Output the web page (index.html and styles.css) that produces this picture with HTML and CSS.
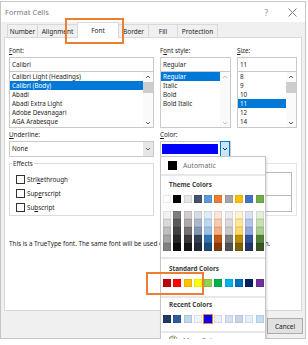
FILE: index.html
```html
<!DOCTYPE html>
<html lang="en">
  <head>
    <meta charset="UTF-8" />
    <title>Format Cells</title>
    <link rel="stylesheet" href="styles.css">
  </head>
  <body>
    <div class="dialog">
      <div class="titlebar">
        <span class="title">Format Cells</span>
        <span class="help">?</span>
        <svg class="close" width="9" height="9" viewBox="0 0 9 9"><path d="M0.5 0.5 L8.5 8.5 M8.5 0.5 L0.5 8.5" stroke="#6e6e6e" stroke-width="0.9" fill="none"/></svg>
      </div>

      <div class="tabs">
        <div class="tab tab-number">Number</div>
        <div class="tab tab-align">Alignment</div>
        <div class="tab tab-font active">Font</div>
        <div class="tab tab-border">Border</div>
        <div class="tab tab-fill">Fill</div>
        <div class="tab tab-prot">Protection</div>
      </div>

      <div class="page">
        <div class="cols">
          <div class="field">
            <div class="label"><u>F</u>ont:</div>
            <div class="input">Calibri</div>
            <div class="list">
              <div class="items">
                <div class="opt">Calibri Light (Headings)</div>
                <div class="opt sel">Calibri (Body)</div>
                <div class="opt">Abadi</div>
                <div class="opt">Abadi Extra Light</div>
                <div class="opt">Adobe Devanagari</div>
                <div class="opt">AGA Arabesque</div>
              </div>
              <div class="scroll">
                <svg width="6" height="4" viewBox="0 0 6 4"><path d="M1 3 L3 1 L5 3" stroke="#606060" fill="none"/></svg>
                <div class="thumb"></div>
                <svg class="down" width="6" height="4" viewBox="0 0 6 4"><path d="M1 1 L3 3 L5 1" stroke="#606060" fill="none"/></svg>
              </div>
            </div>
          </div>

          <div class="field">
            <div class="label">F<u>o</u>nt style:</div>
            <div class="input">Regular</div>
            <div class="list">
              <div class="items">
                <div class="opt sel">Regular</div>
                <div class="opt">Italic</div>
                <div class="opt">Bold</div>
                <div class="opt">Bold Italic</div>
              </div>
              <div class="scroll">
                <svg width="6" height="4" viewBox="0 0 6 4"><path d="M1 3 L3 1 L5 3" stroke="#c2c2c2" fill="none"/></svg>
                <svg class="down" width="6" height="4" viewBox="0 0 6 4"><path d="M1 1 L3 3 L5 1" stroke="#c2c2c2" fill="none"/></svg>
              </div>
            </div>
          </div>

          <div class="field">
            <div class="label"><u>S</u>ize:</div>
            <div class="input">11</div>
            <div class="list">
              <div class="items">
                <div class="opt">8</div>
                <div class="opt">9</div>
                <div class="opt">10</div>
                <div class="opt sel">11</div>
                <div class="opt">12</div>
                <div class="opt">14</div>
              </div>
              <div class="scroll">
                <svg width="6" height="4" viewBox="0 0 6 4"><path d="M1 3 L3 1 L5 3" stroke="#606060" fill="none"/></svg>
                <div class="thumb"></div>
                <svg class="down" width="6" height="4" viewBox="0 0 6 4"><path d="M1 1 L3 3 L5 1" stroke="#606060" fill="none"/></svg>
              </div>
            </div>
          </div>
        </div>

        <div class="cols mid">
          <div class="field">
            <div class="label"><u>U</u>nderline:</div>
            <div class="select">
              <div class="val">None</div>
              <div class="arrow">
                <svg width="6" height="4" viewBox="0 0 6 4"><path d="M1 1 L3 3 L5 1" stroke="#606060" fill="none"/></svg>
              </div>
            </div>
          </div>
          <div class="field">
            <div class="label"><u>C</u>olor:</div>
            <div class="select color-select">
              <div class="chosen"></div>
              <div class="arrow open">
                <svg width="6" height="4" viewBox="0 0 6 4"><path d="M1 1 L3 3 L5 1" stroke="#333" fill="none"/></svg>
              </div>
            </div>
          </div>
        </div>

        <div class="groups">
          <div class="group">
            <div class="legend">Effects</div>
            <div class="checks">
              <div class="check"><span class="box"></span><span>Stri<u>k</u>ethrough</span></div>
              <div class="check"><span class="box"></span><span>Sup<u>e</u>rscript</span></div>
              <div class="check"><span class="box"></span><span>Su<u>b</u>script</span></div>
            </div>
          </div>
          <!-- preview: its title and sample sit under the open colour list -->
          <div class="group preview-group">
            <div class="sample-box">
              <div class="sample"></div>
            </div>
          </div>
        </div>

        <p class="note">This is a TrueType font.  The same font will be used on both your printer and your screen.</p>
      </div>

      <div class="buttons">
        <button class="btn">OK</button>
        <button class="btn">Cancel</button>
      </div>

      <div class="palette">
        <div class="auto">
          <span class="auto-swatch"></span>
          <span class="auto-text">Automatic</span>
        </div>
        <div class="sep"></div>

        <div class="head">Theme Colors</div>
        <div class="swatches theme"></div>
        <div class="swatches shades"></div>
        <div class="sep sep-std"></div>

        <div class="head head-std">Standard Colors</div>
        <div class="swatches standard"></div>
        <div class="sep sep-recent"></div>

        <div class="head head-recent">Recent Colors</div>
        <div class="swatches recent"></div>
        <div class="sep sep-more"></div>

        <div class="more">
          <svg width="10" height="10" viewBox="0 0 10 10">
            <path d="M5 1a4 4 0 1 0 0 8c.6 0 .9-.4.9-.9 0-.3-.1-.5-.3-.7-.2-.2-.3-.4-.3-.7 0-.5.4-.9.9-.9H7a2 2 0 0 0 2-2C9 2.6 7.2 1 5 1z" fill="none" stroke="#7a7a7a" stroke-width="0.8"/>
            <circle cx="2.9" cy="4.3" r="0.8" fill="#e04040"/>
            <circle cx="4.3" cy="2.6" r="0.8" fill="#f0b400"/>
            <circle cx="6.3" cy="2.9" r="0.8" fill="#3aa048"/>
            <circle cx="3" cy="6.4" r="0.8" fill="#2f6fd0"/>
          </svg>
          <span class="more-text"><u>M</u>ore Colors...</span>
        </div>
      </div>

      <div class="mark mark-tab"></div>
      <div class="mark mark-std"></div>
    </div>

    <script>
      const theme = ['#FFFFFF', '#000000', '#E7E6E6', '#44546A', '#5B9BD5', '#ED7D31', '#A5A5A5', '#FFC000', '#4472C4', '#70AD47'];
      const shades = [
        ['#F2F2F2', '#D9D9D9', '#BFBFBF', '#A6A6A6', '#808080'],
        ['#7F7F7F', '#595959', '#404040', '#262626', '#0D0D0D'],
        ['#D0CECE', '#AEAAAA', '#757171', '#3A3838', '#171616'],
        ['#D6DCE4', '#ADB9CA', '#8497B0', '#333F4F', '#222A35'],
        ['#DDEBF7', '#BDD7EE', '#9BC2E6', '#2F75B5', '#1F4E78'],
        ['#FCE4D6', '#F8CBAD', '#F4B084', '#C65911', '#833C0C'],
        ['#EDEDED', '#DBDBDB', '#C9C9C9', '#7B7B7B', '#525252'],
        ['#FFF2CC', '#FFE699', '#FFD966', '#BF8F00', '#806000'],
        ['#D9E1F2', '#B4C6E7', '#8EA9DB', '#305496', '#203764'],
        ['#E2EFDA', '#C6E0B4', '#A9D08E', '#548235', '#375623'],
      ];
      const standard = ['#C00000', '#FF0000', '#FFC000', '#FFFF00', '#92D050', '#00B050', '#00B0F0', '#0070C0', '#002060', '#7030A0'];
      const recent = ['#203864', '#2E5C99', '#BDD7EE', '#EEF4FB', '#0000FF', '#E8EEF8', '#D6E0F2', '#C9D5EE', '#E2EEFA', '#C5DDF3'];

      function fill(selector, colors, picked) {
        const box = document.querySelector(selector);
        colors.forEach((c, i) => {
          const cls = i === picked ? 'sw picked' : 'sw';
          box.insertAdjacentHTML('beforeend', `<span class="${cls}" style="background:${c}"></span>`);
        });
      }

      fill('.theme', theme);
      fill('.shades', shades.flat());
      fill('.standard', standard);
      fill('.recent', recent, 4);
    </script>
  </body>
</html>
```

FILE: styles.css
```css
* {
  box-sizing: border-box;
}
body {
  margin: 0;
  padding: 0;
  background: #fff;
  overflow: hidden;
  font-family: "Noto Sans", "Liberation Sans", sans-serif;
  font-size: 6.3px;
  color: #1e1e1e;
}
u {
  text-decoration-thickness: 0.5px;
}

.dialog {
  position: relative;
  width: 306px;
  height: 338px;
  margin-top: 1px;
  border: 1px solid #c6c6c6;
  background: #f0f0f0;
}

.titlebar {
  display: flex;
  align-items: center;
  height: 20px;
  padding: 0 8px 0 4px;
  background: #fff;
}
.title {
  flex: 1;
  font-size: 7.5px;
  color: #7a7a7a;
}
.help {
  font-size: 8px;
  color: #8a8a8a;
  margin-right: 20px;
}

.tabs {
  display: flex;
  align-items: flex-end;
  height: 15px;
  padding-left: 6px;
}
.tab {
  height: 13px;
  margin-right: -1px;
  border: 1px solid #d9d9d9;
  border-bottom: none;
  background: #f0f0f0;
  display: flex;
  align-items: center;
  justify-content: center;
  font-size: 6.5px;
  color: #1e1e1e;
}
.tab-number { width: 31px; }
.tab-align { width: 41px; }
.tab-font { width: 42px; }
.tab-border { width: 31px; }
.tab-fill { width: 30px; }
.tab-prot { width: 41px; }
.tab.active {
  height: 16px;
  margin-bottom: -1px;
  background: #fff;
  position: relative;
  z-index: 1;
}

.page {
  height: 274px;
  margin: 0 3px;
  padding: 8px 3px 0 4px;
  border: 1px solid #d9d9d9;
  background: #fff;
}

.cols {
  display: grid;
  grid-template-columns: 145px 71px 60px;
  column-gap: 6px;
}
.label {
  height: 10px;
  line-height: 10px;
  white-space: nowrap;
}
.input {
  margin-top: 1px;
  height: 15px;
  line-height: 13px;
  padding-left: 2px;
  border: 1px solid #c9c9c9;
}
.list {
  display: flex;
  margin-top: -1px;
  height: 57px;
  border: 1px solid #c9c9c9;
}
.items {
  flex: 1;
  overflow: hidden;
}
.opt {
  height: 9px;
  line-height: 9px;
  padding-left: 2px;
  white-space: nowrap;
}
.opt.sel {
  background: #0078d7;
  color: #fff;
}
.scroll {
  width: 10px;
  display: flex;
  flex-direction: column;
  align-items: center;
  padding: 3px 0 2px;
  background: #fafafa;
}
.thumb {
  width: 10px;
  height: 11px;
  margin-top: 3px;
  background: #cdcdcd;
}
.scroll .down {
  margin-top: auto;
}

.mid {
  margin-top: 2px;
}
.mid .label {
  margin-bottom: 1px;
}
.select {
  display: flex;
  height: 16px;
  border: 1px solid #c9c9c9;
}
.val {
  flex: 1;
  padding-left: 2px;
  line-height: 14px;
}
.arrow {
  width: 10px;
  background: #e6e6e6;
  display: flex;
  align-items: center;
  justify-content: center;
}
.color-select {
  padding: 1px;
  gap: 2px;
}
.chosen {
  width: 57px;
  height: 10px;
  margin-top: 1px;
  background: #0000ff;
}
.arrow.open {
  width: 10px;
  margin: -2px -1px -2px 0;
  border: 1px solid #0078d7;
  background: #cce4f7;
}

.groups {
  display: grid;
  grid-template-columns: 145px 137px;
  column-gap: 6px;
  margin-top: 6px;
}
.group {
  height: 53px;
  padding: 0 6px;
  border: 1px solid #dcdcdc;
}
.legend {
  width: max-content;
  margin: -5px 0 0 -4px;
  padding: 0 1px;
  height: 10px;
  line-height: 10px;
  background: #fff;
}
.checks {
  margin-top: 3px;
}
.check {
  display: flex;
  align-items: center;
  gap: 2px;
  height: 14px;
}
.box {
  width: 9px;
  height: 9px;
  border: 1px solid #333;
}
.preview-group {
  padding: 8px 4px 0 6px;
  border-color: #e6e6e6;
}
.sample-box {
  height: 40px;
  border: 1px solid #b9b9b9;
}
.sample {
  height: 23px;
  border-bottom: 1px solid #b9b9b9;
}

.note {
  margin: 23px 0 0;
  line-height: 10px;
  white-space: nowrap;
  overflow: hidden;
}

.buttons {
  display: flex;
  justify-content: flex-end;
  gap: 4px;
  padding: 7px 2px 0 0;
}
.btn {
  width: 36px;
  height: 16px;
  padding: 0;
  border: 1px solid #adadad;
  background: #e1e1e1;
  font-family: inherit;
  font-size: 6.5px;
  color: #1e1e1e;
}

/* colour dropdown, open over the dialog */
.palette {
  position: absolute;
  left: 159px;
  top: 154px;
  width: 106px;
  height: 200px;
  border: 1px solid #c6c6c6;
  background: #fff;
  box-shadow: 1px 1px 2px rgba(0, 0, 0, 0.15);
  z-index: 5;
}
.auto {
  display: flex;
  align-items: flex-start;
  gap: 6px;
  height: 17px;
  padding: 4px 0 0 7px;
}
.auto-swatch {
  width: 9px;
  height: 9px;
  background: #000;
}
.auto-text {
  line-height: 9px;
  font-size: 6.8px;
  color: #6d6d6d;
}
.sep {
  height: 2px;
  background: #e8e8e8;
}
.head {
  margin: 4px 0 0 8px;
  height: 10px;
  line-height: 10px;
  font-weight: bold;
  color: #3c3c3c;
}
.swatches {
  display: grid;
  grid-template-columns: repeat(10, 8px);
  grid-auto-rows: 8px;
  column-gap: 2.3px;
  margin-top: 5px;
  padding-left: 2px;
}
.shades {
  grid-template-rows: repeat(5, 8px);
  grid-auto-flow: column;
  margin-top: 8px;
}
.sw {
  box-shadow: inset 0 0 0 0.5px rgba(0, 0, 0, 0.15);
}
.sw.picked {
  outline: 1.5px solid #ed7d31;
}
.sep-std {
  margin-top: 6px;
}
.head-std {
  margin-top: 5px;
}
.sep-recent {
  margin-top: 9px;
}
.head-recent {
  margin-top: 2px;
}
.sep-more {
  margin-top: 8px;
}
.more {
  display: flex;
  align-items: center;
  gap: 5px;
  height: 10px;
  margin-top: 2px;
  padding-left: 7px;
}
.more-text {
  font-size: 6.8px;
  color: #777;
}

/* orange annotation boxes */
.mark {
  position: absolute;
  border: 2px solid #ed7d31;
  z-index: 10;
}
.mark-tab {
  left: 64px;
  top: 16px;
  width: 59px;
  height: 26px;
}
.mark-std {
  left: 145px;
  top: 270px;
  width: 58px;
  height: 23px;
}
```
